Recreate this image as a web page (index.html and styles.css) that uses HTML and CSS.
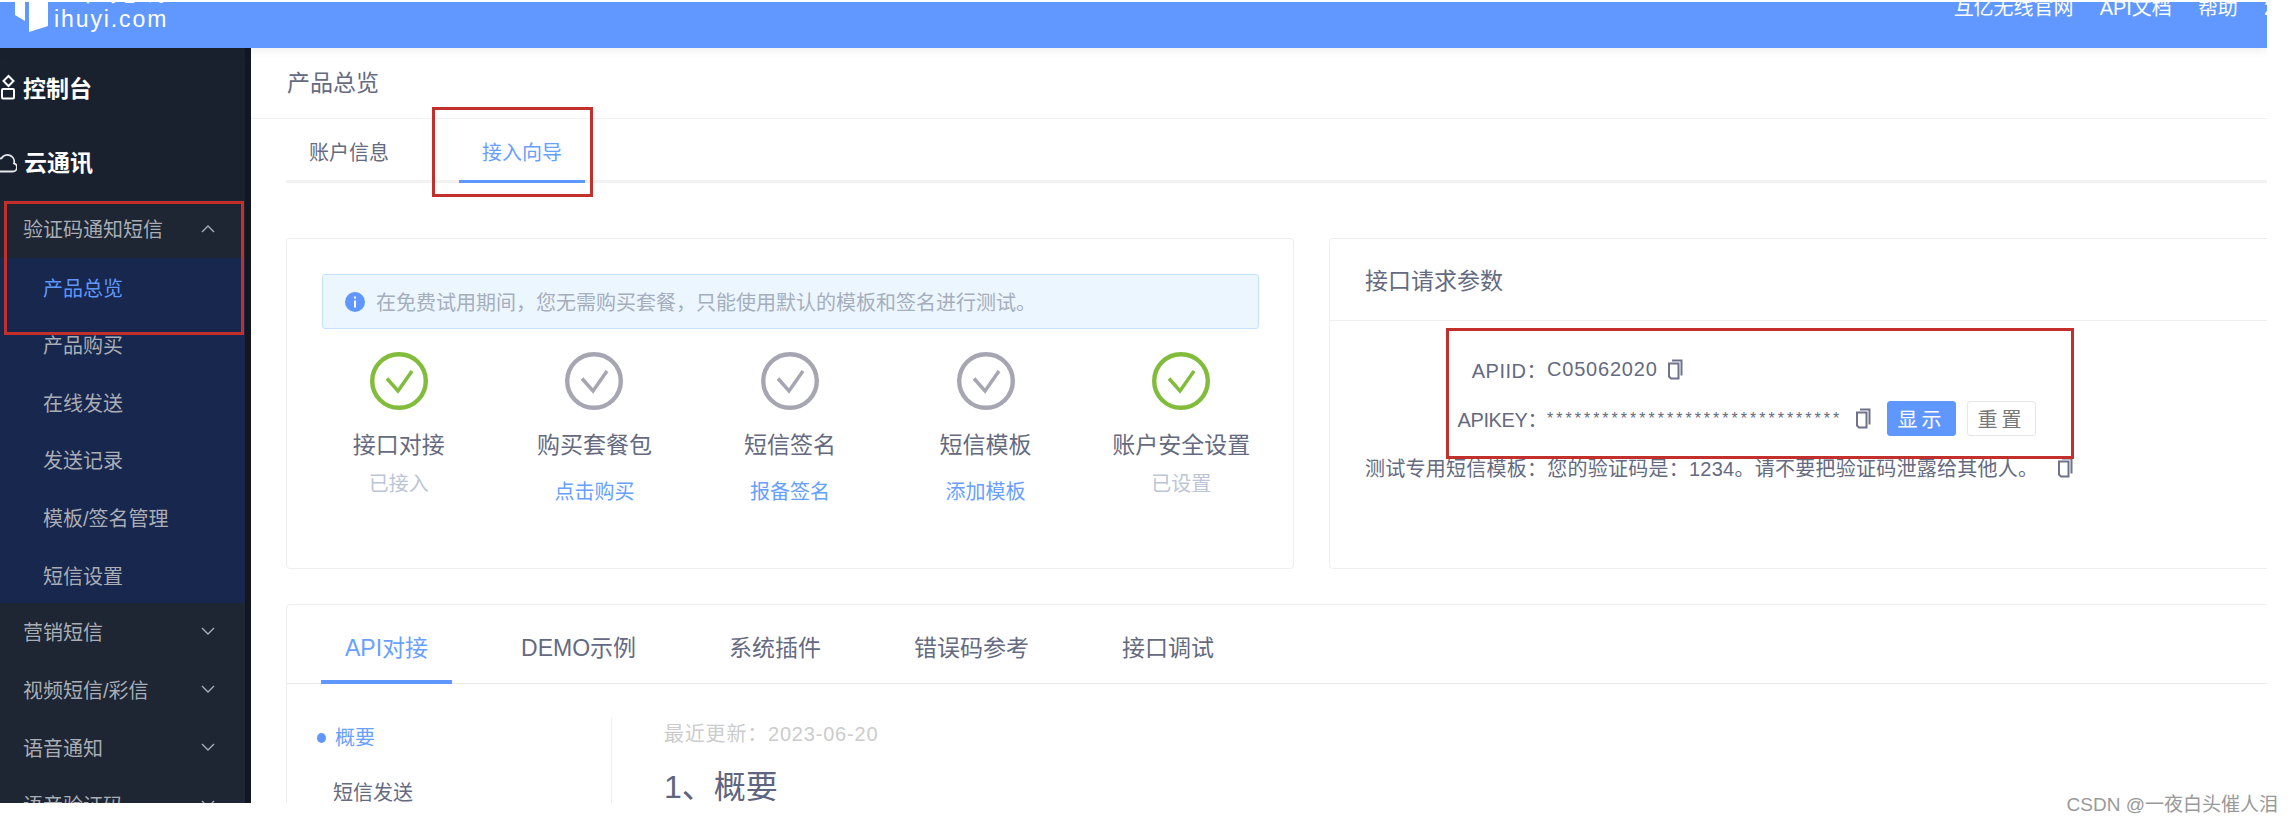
FILE: index.html
```html
<!DOCTYPE html>
<html lang="zh-CN">
<head>
  <meta charset="UTF-8">
  <title>产品总览</title>
  <link rel="stylesheet" href="styles.css">
</head>
<body>
  <div class="shot">
    <header class="topbar">
      <div class="logo">
        <svg class="logo-mark" width="34" height="30" viewBox="0 0 34 30"><path d="M0 0h10v19l-10-6z" fill="#fff"/><path d="M14 0h19v24l-19 6z" fill="#fff"/></svg>
        <div class="logo-text">
          <span class="logo-cn">互亿无线</span>
          <span class="logo-en">ihuyi.com</span>
        </div>
      </div>
      <nav class="topnav">
        <a>互亿无线官网</a>
        <a>API文档</a>
        <a>帮助</a>
        <a>2</a>
      </nav>
    </header>

    <div class="layout">
      <aside class="sidebar">
        <div class="side-head side-head-first">
          <svg class="side-icon" width="16" height="26" viewBox="0 0 16 26" fill="none" stroke="#fff" stroke-width="2"><path d="M8.500 2l5 5-5 5-5-5z"/><rect x="2" y="15" width="12" height="9.500" rx="1"/></svg>
          <span>控制台</span>
        </div>
        <div class="side-head side-head-second">
          <svg class="side-icon" width="17" height="24" viewBox="0 0 17 24" fill="none" stroke="#e6e8eb" stroke-width="1.800"><path d="M-4 22.500h16.500a4.200 4.200 0 0 0 1.500-8.200 6.800 6.800 0 0 0-12.500-5 6 6 0 0 0-5.500 4"/></svg>
          <span>云通讯</span>
        </div>
        <div class="menu-title menu-title-open">
          <span>验证码通知短信</span>
          <svg class="chevron" width="14" height="9" viewBox="0 0 14 9" fill="none" stroke="#a8adb6" stroke-width="1.400"><path d="M1 8l6-6 6 6"/></svg>
        </div>
        <ul class="submenu">
          <li class="submenu-active">产品总览</li>
          <li>产品购买</li>
          <li>在线发送</li>
          <li>发送记录</li>
          <li>模板/签名管理</li>
          <li>短信设置</li>
        </ul>
        <div class="menu-title">
          <span>营销短信</span>
          <svg class="chevron" width="14" height="9" viewBox="0 0 14 9" fill="none" stroke="#a8adb6" stroke-width="1.400"><path d="M1 1l6 6 6-6"/></svg>
        </div>
        <div class="menu-title">
          <span>视频短信/彩信</span>
          <svg class="chevron" width="14" height="9" viewBox="0 0 14 9" fill="none" stroke="#a8adb6" stroke-width="1.400"><path d="M1 1l6 6 6-6"/></svg>
        </div>
        <div class="menu-title">
          <span>语音通知</span>
          <svg class="chevron" width="14" height="9" viewBox="0 0 14 9" fill="none" stroke="#a8adb6" stroke-width="1.400"><path d="M1 1l6 6 6-6"/></svg>
        </div>
        <div class="menu-title">
          <span>语音验证码</span>
          <svg class="chevron" width="14" height="9" viewBox="0 0 14 9" fill="none" stroke="#a8adb6" stroke-width="1.400"><path d="M1 1l6 6 6-6"/></svg>
        </div>
      </aside>

      <main class="content">
        <div class="crumb">产品总览</div>
        <div class="tabs">
          <div class="tab">账户信息</div>
          <div class="tab tab-active">接入向导</div>
        </div>

        <div class="panels">
          <section class="card card-steps">
            <div class="alert">
              <svg width="20" height="20" viewBox="0 0 20 20"><circle cx="10" cy="10" r="10" fill="#5f97ff"/><rect x="9" y="8.500" width="2" height="7" fill="#fff"/><rect x="9" y="4.500" width="2" height="2" fill="#fff"/></svg>
              <span>在免费试用期间，您无需购买套餐，只能使用默认的模板和签名进行测试。</span>
            </div>
            <div class="steps">
              <div class="step">
                <svg class="step-icon" width="58" height="58" viewBox="0 0 58 58" fill="none" stroke="#82bc3c"><circle cx="29" cy="29" r="26.800" stroke-width="4.400"/><path d="M17 26.500l11 12.500 14-20" stroke-width="3.500"/></svg>
                <div class="step-name">接口对接</div>
                <div class="step-note">已接入</div>
              </div>
              <div class="step">
                <svg class="step-icon" width="58" height="58" viewBox="0 0 58 58" fill="none" stroke="#a6a6b3"><circle cx="29" cy="29" r="26.800" stroke-width="4.400"/><path d="M17 26.500l11 12.500 14-20" stroke-width="3.500"/></svg>
                <div class="step-name">购买套餐包</div>
                <a class="step-link">点击购买</a>
              </div>
              <div class="step">
                <svg class="step-icon" width="58" height="58" viewBox="0 0 58 58" fill="none" stroke="#a6a6b3"><circle cx="29" cy="29" r="26.800" stroke-width="4.400"/><path d="M17 26.500l11 12.500 14-20" stroke-width="3.500"/></svg>
                <div class="step-name">短信签名</div>
                <a class="step-link">报备签名</a>
              </div>
              <div class="step">
                <svg class="step-icon" width="58" height="58" viewBox="0 0 58 58" fill="none" stroke="#a6a6b3"><circle cx="29" cy="29" r="26.800" stroke-width="4.400"/><path d="M17 26.500l11 12.500 14-20" stroke-width="3.500"/></svg>
                <div class="step-name">短信模板</div>
                <a class="step-link">添加模板</a>
              </div>
              <div class="step">
                <svg class="step-icon" width="58" height="58" viewBox="0 0 58 58" fill="none" stroke="#82bc3c"><circle cx="29" cy="29" r="26.800" stroke-width="4.400"/><path d="M17 26.500l11 12.500 14-20" stroke-width="3.500"/></svg>
                <div class="step-name">账户安全设置</div>
                <div class="step-note">已设置</div>
              </div>
            </div>
          </section>

          <section class="card card-params">
            <div class="card-title">接口请求参数</div>
            <div class="params">
              <div class="param-row">
                <span class="param-label param-label-id">APIID：</span>
                <span class="param-value">C05062020</span>
                <svg class="copy copy-near" width="16" height="21" viewBox="0 0 16 21" fill="none" stroke="#6f7389" stroke-width="2"><path d="M5 1.500h9.500v15"/><path d="M2 4.500h9.500v15H4l-2-2z"/></svg>
              </div>
              <div class="param-row">
                <span class="param-label param-label-key">APIKEY：</span>
                <span class="param-stars">********************************</span>
                <svg class="copy" width="16" height="21" viewBox="0 0 16 21" fill="none" stroke="#6f7389" stroke-width="2"><path d="M5 1.500h9.500v15"/><path d="M2 4.500h9.500v15H4l-2-2z"/></svg>
                <button class="btn btn-primary">显示</button>
                <button class="btn">重置</button>
              </div>
              <div class="param-row param-row-plain">
                <span>测试专用短信模板：您的验证码是：1234。请不要把验证码泄露给其他人。</span>
                <svg class="copy" width="16" height="21" viewBox="0 0 16 21" fill="none" stroke="#6f7389" stroke-width="2"><path d="M5 1.500h9.500v15"/><path d="M2 4.500h9.500v15H4l-2-2z"/></svg>
              </div>
            </div>
          </section>
        </div>

        <section class="card card-docs">
          <div class="doc-tabs">
            <div class="doc-tab doc-tab-active">API对接</div>
            <div class="doc-tab">DEMO示例</div>
            <div class="doc-tab">系统插件</div>
            <div class="doc-tab">错误码参考</div>
            <div class="doc-tab">接口调试</div>
          </div>
          <div class="doc-body">
            <ul class="doc-nav">
              <li class="doc-nav-active">概要</li>
              <li>短信发送</li>
            </ul>
            <div class="doc-main">
              <div class="doc-date">最近更新：2023-06-20</div>
              <h2>1、概要</h2>
            </div>
          </div>
        </section>
      </main>
    </div>
  </div>

  <!-- annotations drawn over the screenshot -->
  <div class="mark mark-menu"></div>
  <div class="mark mark-tab"></div>
  <div class="mark mark-params"></div>
  <div class="watermark">CSDN @一夜白头催人泪</div>
</body>
</html>
```

FILE: styles.css
```css
* {
  margin: 0;
  padding: 0;
  box-sizing: border-box;
}

html, body {
  height: 100%;
  overflow: hidden;
  background: #fff;
}

body {
  position: relative;
  font-family: "Liberation Sans", "Noto Sans CJK SC", sans-serif;
  font-size: 20px;
  color: #656a80;
}

ul {
  list-style: none;
}

.shot {
  width: 2267px;
  height: 801px;
  margin-top: 2px;
  display: flex;
  flex-direction: column;
  overflow: hidden;
}

/* top bar */
.topbar {
  position: relative;
  z-index: 2;
  flex: 0 0 46px;
  display: flex;
  justify-content: space-between;
  background: #6198ff;
  box-shadow: 0 2px 10px rgba(0, 0, 0, 0.08);
  overflow: hidden;
  color: #fff;
}

.logo {
  display: flex;
  padding-left: 15px;
}

.logo-text {
  display: flex;
  flex-direction: column;
  margin: -22px 0 0 5px;
}

.logo-cn {
  font-size: 27px;
  line-height: 24px;
  letter-spacing: 1px;
}

.logo-en {
  margin-top: 2px;
  font-size: 23px;
  line-height: 26px;
  letter-spacing: 1.900px;
}

.topnav {
  display: flex;
  gap: 26px;
  margin: -8px -8px 0 0;
  line-height: 28px;
  white-space: nowrap;
}

/* sidebar */
.layout {
  flex: 1;
  display: flex;
  min-height: 0;
}

.sidebar {
  flex: 0 0 251px;
  background: #19212f;
  border-right: 6px solid #121720;
  color: #a8adb6;
  overflow: hidden;
}

.side-head {
  display: flex;
  align-items: center;
  font-size: 23px;
  font-weight: 700;
  color: #fff;
}

.side-head-first {
  height: 77px;
}

.side-head-second {
  height: 75px;
  padding-bottom: 3px;
}

.side-icon {
  flex: none;
  margin-right: 7px;
}

.menu-title {
  height: 57.600px;
  display: flex;
  justify-content: space-between;
  align-items: center;
  padding: 0 30px 0 23px;
  background: #1e2533;
}

.submenu {
  background: #18274d;
}

.submenu li {
  height: 57.600px;
  line-height: 62px;
  padding-left: 43px;
}

.submenu .submenu-active {
  color: #5f97ff;
}

/* content area */
.content {
  flex: 1;
  min-width: 0;
  overflow: hidden;
}

.crumb {
  height: 71px;
  line-height: 70px;
  padding-left: 36px;
  font-size: 23px;
  border-bottom: 1px solid #f0f0f0;
}

.tabs {
  display: flex;
  gap: 47px;
  height: 64px;
  margin-left: 35px;
  border-bottom: 3px solid #f2f2f2;
}

.tab {
  height: 64px;
  padding: 20px 23px 0;
  line-height: 28px;
}

.tab-active {
  color: #68a0ff;
  border-bottom: 3px solid #5f97ff;
}

.panels {
  display: flex;
  gap: 35px;
  margin: 55px -12px 0 35px;
}

.card {
  background: #fff;
  border: 1px solid #eee;
  border-radius: 4px;
}

.card-steps {
  flex: 0 0 1008px;
  height: 331px;
  padding: 35px 34px 0 35px;
}

.alert {
  height: 55px;
  display: flex;
  align-items: center;
  gap: 11px;
  padding-left: 22px;
  background: #ecf6ff;
  border: 1px solid #c4e1ff;
  border-radius: 3px;
  color: #a5aebd;
}

.steps {
  display: grid;
  grid-template-columns: repeat(5, 1fr);
  margin: 23px -20px 0 -21px;
  text-align: center;
}

.step-icon {
  display: block;
  margin: 0 auto 20px;
}

.step-name {
  font-size: 23px;
  line-height: 30px;
}

.step-note {
  margin-top: 10px;
  line-height: 28px;
  color: #bcc5d5;
}

.step-link {
  display: block;
  margin-top: 18px;
  line-height: 28px;
  color: #68a0ff;
}

.card-params {
  flex: 1;
  height: 331px;
}

.card-title {
  height: 82px;
  padding: 27px 0 0 35px;
  font-size: 23px;
  line-height: 30px;
  border-bottom: 1px solid #eee;
}

.params {
  display: flex;
  flex-direction: column;
  gap: 14px;
  padding-top: 31px;
}

.param-row {
  height: 35px;
  display: flex;
  align-items: center;
}

.param-label {
  flex: 0 0 217px;
  text-align: right;
}

.param-label-id {
  letter-spacing: 0.500px;
}

.param-label-key {
  letter-spacing: -0.400px;
}

.param-value {
  letter-spacing: 0.800px;
}

.param-stars {
  width: 294px;
  font-size: 16px;
  letter-spacing: 3px;
  white-space: nowrap;
  overflow: hidden;
}

.copy {
  flex: none;
  margin-left: 14px;
}

.copy-near {
  margin-left: 9px;
}

.btn {
  width: 69px;
  height: 35px;
  margin-left: 11px;
  background: #fff;
  border: 1px solid #e6e6e6;
  border-radius: 3px;
  font: inherit;
  letter-spacing: 4px;
  color: #777;
}

.btn-primary {
  margin-left: 16px;
  background: #5f97ff;
  border-color: #5f97ff;
  color: #fff;
}

.param-row-plain {
  padding-left: 35px;
  letter-spacing: 0.250px;
}

.param-row-plain .copy {
  margin-left: 19px;
}

.card-docs {
  height: 240px;
  margin: 35px -12px 0 35px;
}

.doc-tabs {
  display: flex;
  gap: 45px;
  height: 79px;
  padding-left: 34px;
  border-bottom: 1px solid #e9e9e9;
}

.doc-tab {
  height: 79px;
  padding: 27px 24px 0;
  font-size: 23px;
  line-height: 32px;
  white-space: nowrap;
}

.doc-tab-active {
  color: #68a0ff;
  border-bottom: 4px solid #5f97ff;
}

.doc-body {
  display: flex;
  padding-top: 34px;
}

.doc-nav {
  flex: 0 0 325px;
  height: 120px;
  padding-left: 46px;
  border-right: 1px solid #eee;
}

.doc-nav li {
  height: 55px;
  line-height: 40px;
}

.doc-nav .doc-nav-active {
  position: relative;
  padding-left: 2px;
  color: #68a0ff;
}

.doc-nav-active::before {
  content: "";
  position: absolute;
  left: -16px;
  top: 15px;
  width: 9px;
  height: 10px;
  border-radius: 50%;
  background: #5f97ff;
}

.doc-main {
  padding-left: 52px;
}

.doc-date {
  line-height: 32px;
  letter-spacing: 0.800px;
  color: #ccc;
}

.doc-main h2 {
  margin-top: 16px;
  font-size: 32px;
  font-weight: 400;
  line-height: 42px;
  color: #5f6480;
}

/* red annotation boxes and the watermark lie over the screenshot */
.mark {
  position: absolute;
  border: 3px solid #c3302b;
}

.mark-menu {
  left: 4px;
  top: 201px;
  width: 240px;
  height: 134px;
}

.mark-tab {
  left: 432px;
  top: 107px;
  width: 161px;
  height: 90px;
}

.mark-params {
  left: 1446px;
  top: 328px;
  width: 628px;
  height: 131px;
}

.watermark {
  position: absolute;
  right: 15px;
  top: 793px;
  font-size: 19px;
  line-height: 24px;
  color: #999;
}
```
